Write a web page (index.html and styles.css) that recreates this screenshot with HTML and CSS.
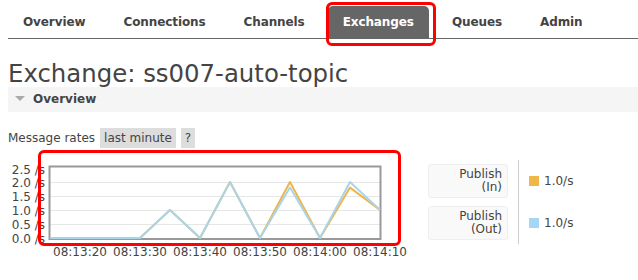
FILE: index.html
```html
<!DOCTYPE html>
<html>
<head>
<meta charset="utf-8">
<title>Exchange: ss007-auto-topic</title>
<link rel="stylesheet" href="styles.css">
</head>
<body>
<ul class="tabs">
  <li>Overview</li>
  <li>Connections</li>
  <li>Channels</li>
  <li class="active">Exchanges</li>
  <li>Queues</li>
  <li>Admin</li>
</ul>

<h1>Exchange: ss007-auto-topic</h1>

<div class="section-head"><span class="arrow"></span>Overview</div>

<div class="rates-bar">
  <span>Message rates</span>
  <span class="pill">last minute</span>
  <span class="pill">?</span>
</div>

<div class="chart-row">
  <svg class="chart" width="410" height="100" viewBox="0 0 410 100">
    <!-- grid -->
    <g stroke="#e6e6e6" stroke-width="1">
      <line x1="42" y1="22.5" x2="372" y2="22.5"/>
      <line x1="42" y1="36.5" x2="372" y2="36.5"/>
      <line x1="42" y1="50.5" x2="372" y2="50.5"/>
      <line x1="42" y1="64.5" x2="372" y2="64.5"/>
    </g>
    <rect x="41.5" y="6.5" width="331" height="72.5" fill="none" stroke="#999" stroke-width="2"/>
    <!-- y axis -->
    <g class="axis" text-anchor="end">
      <text x="37" y="13.5">2.5 /s</text>
      <text x="37" y="27">2.0 /s</text>
      <text x="37" y="41">1.5 /s</text>
      <text x="37" y="55">1.0 /s</text>
      <text x="37" y="69">0.5 /s</text>
      <text x="37" y="82.5">0.0 /s</text>
    </g>
    <!-- x axis -->
    <g class="axis" text-anchor="middle">
      <text x="72" y="95.5">08:13:20</text>
      <text x="132" y="95.5">08:13:30</text>
      <text x="192" y="95.5">08:13:40</text>
      <text x="252" y="95.5">08:13:50</text>
      <text x="312" y="95.5">08:14:00</text>
      <text x="372" y="95.5">08:14:10</text>
    </g>
    <!-- publish in -->
    <polyline fill="none" stroke="#efb548" stroke-width="2" stroke-linejoin="round"
      points="42,78 72,78 102,78 132,78 162,50 192,78 222,22 252,78 282,22 312,78 342,27.6 372,50"/>
    <!-- publish out -->
    <polyline fill="none" stroke="#a9d5ea" stroke-width="2" stroke-linejoin="round"
      points="42,78 72,78 102,78 132,78 162,50 192,78 222,22 252,78 282,27.6 312,78 342,22 372,50"/>
  </svg>

  <div class="legend">
    <div class="legend-box">Publish<br>(In)</div>
    <div class="legend-box">Publish<br>(Out)</div>
  </div>

  <div class="sep"></div>

  <div class="values">
    <div class="value-row"><span class="swatch swatch-in"></span>1.0/s</div>
    <div class="value-row"><span class="swatch swatch-out"></span>1.0/s</div>
  </div>
</div>

<div class="mark mark-tab"></div>
<div class="mark mark-chart"></div>
</body>
</html>
```

FILE: styles.css
```css
/* base */
body{
margin:0 0 0 8px;
font-family:"DejaVu Sans", Verdana, sans-serif;
font-size:12px;
color:#444;
background:#fff;
overflow:hidden;
}

/* top menu */
.tabs{
list-style:none;
margin:0;
padding:6px 0 0;
display:flex;
border-bottom:1px solid #666;
}
.tabs li{
padding:0 15px;
margin-right:8px;
height:32px;
line-height:32px;
font-weight:bold;
letter-spacing:-0.1px;
}
.tabs li.active{
background:#666;
color:#fff;
border-radius:5px 5px 0 0;
}

h1{
margin:21px 0 0;
font-size:24.4px;
font-weight:normal;
line-height:27px;
color:#444;
}

/* collapsible section header */
.section-head{
height:25px;
line-height:25px;
background:#f5f5f5;
padding-left:7px;
font-weight:bold;
color:#444;
}
.arrow{
display:inline-block;
width:0;
height:0;
border-left:5px solid transparent;
border-right:5px solid transparent;
border-top:5px solid #aaa;
margin-right:8px;
vertical-align:middle;
position:relative;
top:-1px;
}

/* rates option bar */
.rates-bar{
margin-top:16px;
display:flex;
align-items:center;
gap:5px;
height:20px;
}
.pill{
background:#ddd;
padding:3px 4px;
line-height:14px;
}

/* chart + legend */
.chart-row{
margin-top:12px;
display:flex;
align-items:flex-start;
}
.chart{
display:block;
}
.axis{
font-family:"DejaVu Sans", Verdana, sans-serif;
font-size:12px;
fill:#444;
}
.legend{
margin-left:10px;
padding-top:4px;
display:flex;
flex-direction:column;
gap:8px;
}
.legend-box{
box-sizing:border-box;
width:80px;
padding:3px 5px;
line-height:13px;
text-align:right;
background:#f9f9f9;
border:1px solid #eee;
border-radius:3px;
}
.sep{
margin-left:10px;
height:84px;
border-left:1px solid #ccc;
}
.values{
padding-top:4px;
padding-left:10px;
display:flex;
flex-direction:column;
gap:8px;
}
.value-row{
height:34px;
display:flex;
align-items:center;
}
.swatch{
width:10px;
height:10px;
margin-right:5px;
}
.swatch-in{
background:#efb748;
}
.swatch-out{
background:#a6d6f6;
}

/* red highlight marks drawn over the screenshot */
.mark{
position:absolute;
box-sizing:border-box;
border:3px solid #f00;
border-radius:6px;
}
.mark-tab{
left:326px;
top:2px;
width:110px;
height:44px;
}
.mark-chart{
left:38px;
top:150px;
width:363px;
height:96px;
}
```
